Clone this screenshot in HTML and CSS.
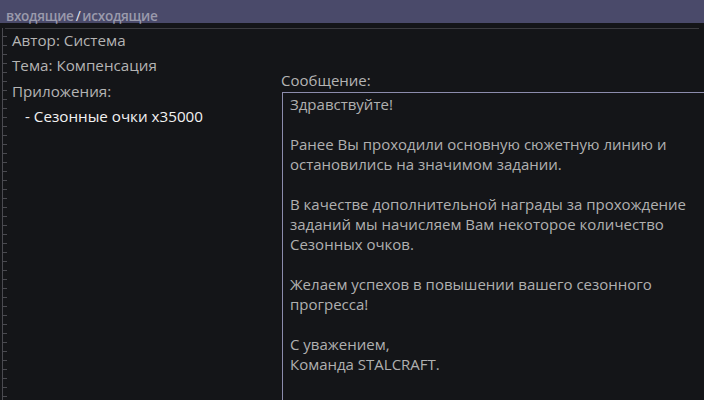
FILE: index.html
```html
<!DOCTYPE html>
<html lang="ru">

<head>
    <meta charset="UTF-8">
    <meta name="viewport" content="width=device-width, initial-scale=1.0">
    <title>Почта</title>
    <link rel="stylesheet" href="styles.css">
</head>

<body>

    <header class="tabs">
        <span class="tab">входящие</span><span class="slash">/</span><span class="tab">исходящие</span>
    </header>

    <main class="mail">
        <section class="meta">
            <p>Автор: Система</p>
            <p>Тема: Компенсация</p>
            <p>Приложения:</p>
            <p class="item">- Сезонные очки x35000</p>
        </section>

        <section class="message">
            <p class="label">Сообщение:</p>
            <div class="body">
                <p>Здравствуйте!</p>
                <p>Ранее Вы проходили основную сюжетную линию и<br>остановились на значимом задании.</p>
                <p>В качестве дополнительной награды за прохождение<br>заданий мы начисляем Вам некоторое количество<br>Сезонных очков.</p>
                <p>Желаем успехов в повышении вашего сезонного<br>прогресса!</p>
                <p>С уважением,<br>Команда STALCRAFT.</p>
            </div>
        </section>
    </main>

</body>

</html>
```

FILE: styles.css
```css
body {
    margin: 0;
    height: 400px;
    overflow: hidden;
    background-color: #141518;
    font-family: 'Open Sans', 'Noto Sans', sans-serif;
    color: #b4b4b4;
}

p {
    margin: 0;
}

/* Tab bar */
.tabs {
    height: 23px;
    padding-left: 6px;
    background-color: #4a4a6a;
    border-bottom: 5px solid #141518;
    box-shadow: 0 6px 0 -5px #3c3c40;
    font-size: 13.6px;
    font-weight: 600;
    line-height: 31px;
    color: #9a9aac;
    letter-spacing: -0.3px;
}

.slash {
    color: #e8e8f0;
    font-weight: 400;
    margin: 0 2px;
}

/* Content */
.mail {
    display: flex;
    height: 372px;
    position: relative;
    background-image: repeating-linear-gradient(to bottom, transparent 0, transparent 8px, #4a4a50 8px, #4a4a50 9px);
    background-size: 5px 100%;
    background-repeat: no-repeat;
    background-position: 2px 0;
}

.mail::before {
    content: "";
    position: absolute;
    left: 2px;
    top: 0;
    bottom: 0;
    width: 1px;
    background-color: #4a4a50;
}

.meta {
    flex-shrink: 0;
    width: 269px;
    padding-left: 12px;
    font-size: 15.2px;
    line-height: 25.3px;
}

.meta .item {
    padding-left: 13px;
    color: #f2f2f2;
}

.message {
    flex-shrink: 0;
    padding-top: 42px;
    font-size: 15px;
}

.label {
    line-height: 20px;
}

.body {
    width: 500px;
    height: 400px;
    margin-top: 2px;
    margin-left: 1px;
    padding: 1px 0 0 7px;
    border: 1px solid #8c8cac;
    font-size: 15px;
    line-height: 20px;
    color: #b0b0b0;
}

.body p {
    margin-bottom: 20px;
}
```
